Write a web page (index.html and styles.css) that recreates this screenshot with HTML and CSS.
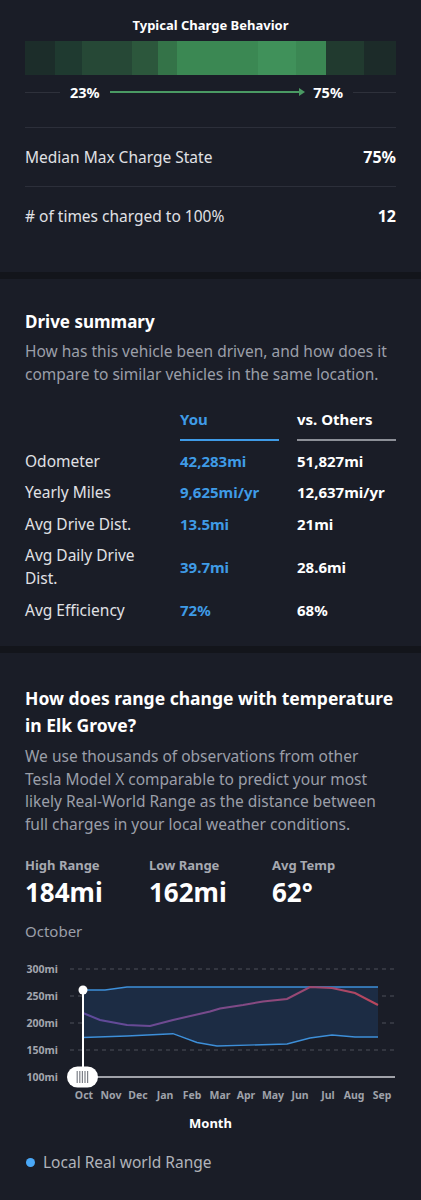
FILE: index.html
```html
<!DOCTYPE html>
<html lang="en">
<head>
<meta charset="utf-8">
<title>Vehicle report</title>
<link rel="stylesheet" href="styles.css">
</head>
<body>
<section class="card charge">
  <h2 class="charge-title">Typical Charge Behavior</h2>
  <div class="charge-bar">
    <span class="seg" style="flex:30;background:#1c2d2a"></span>
    <span class="seg" style="flex:27;background:#1f3a30"></span>
    <span class="seg" style="flex:50;background:#264836"></span>
    <span class="seg" style="flex:26;background:#2c573c"></span>
    <span class="seg" style="flex:19;background:#347348"></span>
    <span class="seg" style="flex:80;background:#3b8853"></span>
    <span class="seg" style="flex:38;background:#40915a"></span>
    <span class="seg" style="flex:30;background:#3b8753"></span>
    <span class="seg" style="flex:38;background:#213a2f"></span>
    <span class="seg" style="flex:32;background:#1c2b29"></span>
  </div>
  <div class="range-row">
    <span class="rule rule-left"></span>
    <span class="range-val">23%</span>
    <span class="arrow"></span>
    <span class="range-val">75%</span>
    <span class="rule rule-right"></span>
  </div>
  <div class="stat-list">
    <div class="stat-row"><span>Median Max Charge State</span><strong>75%</strong></div>
    <div class="stat-row"><span># of times charged to 100%</span><strong>12</strong></div>
  </div>
</section>

<section class="card drive">
  <h2 class="sec-title">Drive summary</h2>
  <p class="desc">How has this vehicle been driven, and how does it compare to similar vehicles in the same location.</p>
  <div class="cmp">
    <span class="cmp-head"></span>
    <span class="cmp-head you">You</span>
    <span class="cmp-head other">vs. Others</span>

    <span class="cmp-label">Odometer</span>
    <span class="cmp-val you">42,283mi</span>
    <span class="cmp-val">51,827mi</span>

    <span class="cmp-label">Yearly Miles</span>
    <span class="cmp-val you">9,625mi/yr</span>
    <span class="cmp-val">12,637mi/yr</span>

    <span class="cmp-label">Avg Drive Dist.</span>
    <span class="cmp-val you">13.5mi</span>
    <span class="cmp-val">21mi</span>

    <span class="cmp-label">Avg Daily Drive Dist.</span>
    <span class="cmp-val you">39.7mi</span>
    <span class="cmp-val">28.6mi</span>

    <span class="cmp-label">Avg Efficiency</span>
    <span class="cmp-val you">72%</span>
    <span class="cmp-val">68%</span>
  </div>
</section>

<section class="card range">
  <h2 class="sec-title big">How does range change with temperature in Elk Grove?</h2>
  <p class="desc tight">We use thousands of observations from other Tesla Model X comparable to predict your most likely Real-World Range as the distance between full charges in your local weather conditions.</p>
  <div class="kpis">
    <div class="kpi"><div class="kpi-label">High Range</div><div class="kpi-val">184mi</div></div>
    <div class="kpi"><div class="kpi-label">Low Range</div><div class="kpi-val">162mi</div></div>
    <div class="kpi"><div class="kpi-label">Avg Temp</div><div class="kpi-val">62°</div></div>
  </div>
  <div class="month-name">October</div>
  <svg class="chart" width="371" height="164" viewBox="25 942 371 164" xmlns="http://www.w3.org/2000/svg">
    <defs>
      <linearGradient id="avg" gradientUnits="userSpaceOnUse" x1="83" y1="0" x2="378" y2="0">
        <stop offset="0" stop-color="#5c4a9c"/>
        <stop offset="0.5" stop-color="#7d4a88"/>
        <stop offset="1" stop-color="#b9465c"/>
      </linearGradient>
    </defs>
    <g class="ylab">
      <text x="58" y="973">300mi</text>
      <text x="58" y="1000">250mi</text>
      <text x="58" y="1027">200mi</text>
      <text x="58" y="1054">150mi</text>
      <text x="58" y="1081">100mi</text>
    </g>
    <g class="grid">
      <line x1="70" y1="969" x2="395" y2="969"/>
      <line x1="70" y1="996" x2="395" y2="996"/>
      <line x1="70" y1="1023" x2="395" y2="1023"/>
      <line x1="70" y1="1050" x2="395" y2="1050"/>
    </g>
    <polygon class="band" points="83,990 105,990 127,987 378,987 378,1037 355,1037 332,1035 310,1038 287,1044 217,1046 197,1042.5 173,1033.7 127,1036 83,1037.5"/>
    <polyline class="edge" points="83,990 105,990 127,987 378,987"/>
    <polyline class="edge" points="83,1037.5 127,1036 173,1033.7 197,1042.5 217,1046 287,1044 310,1038 332,1035 355,1037 378,1037"/>
    <polyline class="avg" points="83,1013 100,1020 127,1025 150,1026 173,1020 210,1011.5 220,1008.5 243,1005 263,1001.5 287,999 310,987 332,988 355,993 378,1005"/>
    <line class="axis" x1="95" y1="1077" x2="395" y2="1077"/>
    <line class="cursor" x1="83" y1="990" x2="83" y2="1068"/>
    <circle class="cursor-dot" cx="83" cy="990" r="4.5"/>
    <rect class="handle" x="67" y="1066.5" width="31" height="21" rx="10.5"/>
    <g class="grip">
      <line x1="77.2" y1="1071" x2="77.2" y2="1083"/>
      <line x1="79.8" y1="1071" x2="79.8" y2="1083"/>
      <line x1="82.4" y1="1071" x2="82.4" y2="1083"/>
      <line x1="85" y1="1071" x2="85" y2="1083"/>
      <line x1="87.6" y1="1071" x2="87.6" y2="1083"/>
    </g>
    <g class="xlab">
      <text x="84" y="1099">Oct</text>
      <text x="111" y="1099">Nov</text>
      <text x="138" y="1099">Dec</text>
      <text x="165" y="1099">Jan</text>
      <text x="192" y="1099">Feb</text>
      <text x="220" y="1099">Mar</text>
      <text x="246" y="1099">Apr</text>
      <text x="273" y="1099">May</text>
      <text x="300" y="1099">Jun</text>
      <text x="328" y="1099">Jul</text>
      <text x="354" y="1099">Aug</text>
      <text x="382" y="1099">Sep</text>
    </g>
  </svg>
  <div class="axis-title">Month</div>
  <div class="legend"><span class="legend-dot"></span><span>Local Real world Range</span></div>
</section>
</body>
</html>
```

FILE: styles.css
```css
* { box-sizing: border-box; }

body {
  margin: 0;
  background: #13151b;
  font-family: "Noto Sans", "Open Sans", sans-serif;
  color: #ffffff;
}

.card {
  background: #1a1d27;
  padding: 0 25px;
}

.card + .card { margin-top: 7px; }

/* Charge behaviour */
.charge {
  padding-top: 17px;
  padding-bottom: 27px;
}

.charge-title {
  margin: 0;
  font-size: 13px;
  line-height: 16px;
  font-weight: 700;
  text-align: center;
}

.charge-bar {
  display: flex;
  height: 34px;
  margin-top: 8px;
}

.seg { display: block; }

.range-row {
  display: flex;
  align-items: center;
  gap: 10px;
  height: 20px;
  margin-top: 7px;
}

.rule {
  display: block;
  height: 1px;
  background: #2e313b;
}
.rule-left { width: 35px; }
.rule-right { width: 43px; }

.range-val {
  font-size: 14.5px;
  font-weight: 700;
  line-height: 20px;
}

.arrow {
  position: relative;
  flex: 1;
  height: 2px;
  background: #4a9a63;
}
.arrow::after {
  content: "";
  position: absolute;
  right: -2px;
  top: -3px;
  border-left: 6px solid #4a9a63;
  border-top: 4px solid transparent;
  border-bottom: 4px solid transparent;
}

.stat-list { margin-top: 25px; }

.stat-row {
  display: flex;
  justify-content: space-between;
  align-items: center;
  height: 59px;
  border-top: 1px solid #2c2f3a;
  font-size: 15.5px;
  color: #e0e1e5;
}
.stat-row strong {
  color: #ffffff;
  font-weight: 700;
  font-size: 16px;
}

/* Drive summary */
.drive {
  padding-top: 31px;
  padding-bottom: 19.5px;
}

.sec-title {
  margin: 0;
  font-size: 17px;
  line-height: 24px;
  font-weight: 700;
}

.desc {
  margin: 5.5px 0 0;
  font-size: 15.5px;
  line-height: 23px;
  color: #9b9fa9;
}

.cmp {
  display: grid;
  grid-template-columns: 1fr 99px 99px;
  column-gap: 18px;
  margin-top: 22px;
  font-size: 15px;
  line-height: 23px;
}

.cmp-head {
  font-weight: 700;
  padding-bottom: 8.5px;
  margin-bottom: 4.5px;
}
.cmp-head.you {
  color: #3f9be6;
  border-bottom: 2px solid #3f9be6;
}
.cmp-head.other {
  color: #ffffff;
  border-bottom: 2px solid #8c8f97;
}

.cmp-label {
  padding: 4.25px 0;
  font-size: 15.5px;
  color: #e0e1e5;
}

.cmp-val {
  align-self: center;
  font-weight: 700;
  color: #ffffff;
  white-space: nowrap;
}
.cmp-val.you { color: #3f9be6; }

/* Range */
.range {
  padding-top: 32.5px;
  padding-bottom: 30px;
}

.sec-title.big {
  font-size: 17.5px;
  line-height: 27px;
}

.desc.tight {
  margin-top: 6px;
  line-height: 22.7px;
}

.kpis {
  display: grid;
  grid-template-columns: 124px 123px 1fr;
  margin-top: 20.5px;
}

.kpi-label {
  font-size: 13px;
  line-height: 18px;
  font-weight: 700;
  color: #a6a9b1;
}

.kpi-val {
  margin-top: 2px;
  font-size: 26px;
  line-height: 32px;
  font-weight: 700;
  color: #ffffff;
}

.month-name {
  margin-top: 12px;
  font-size: 15px;
  line-height: 22px;
  color: #9b9fa9;
}

.chart { display: block; }

.ylab text {
  font-family: "Noto Sans", "Open Sans", sans-serif;
  font-size: 10.5px;
  font-weight: 700;
  fill: #a3a6ae;
  text-anchor: end;
}

.xlab text {
  font-family: "Noto Sans", "Open Sans", sans-serif;
  font-size: 10.5px;
  font-weight: 700;
  fill: #9fa2aa;
  text-anchor: middle;
}

.grid line {
  stroke: #4d515b;
  stroke-width: 1;
  stroke-dasharray: 4 4;
}

.band { fill: #1c2c44; }

.edge {
  fill: none;
  stroke: #3d8fd9;
  stroke-width: 1.4;
}

.avg {
  fill: none;
  stroke: url(#avg);
  stroke-width: 2;
}

.axis {
  stroke: #a0a2a9;
  stroke-width: 2;
}

.cursor {
  stroke: #ffffff;
  stroke-width: 2;
}

.cursor-dot { fill: #ffffff; }

.handle { fill: #ffffff; }

.grip line {
  stroke: #7d8088;
  stroke-width: 1.2;
}

.axis-title {
  margin-top: 8px;
  text-align: center;
  font-size: 13px;
  line-height: 18px;
  font-weight: 700;
}

.legend {
  display: flex;
  align-items: center;
  gap: 8px;
  margin-top: 19px;
  font-size: 15.5px;
  line-height: 22px;
  color: #b0b3ba;
}

.legend-dot {
  width: 9px;
  height: 9px;
  margin-left: 1px;
  border-radius: 50%;
  background: #4aa8f7;
}
```
